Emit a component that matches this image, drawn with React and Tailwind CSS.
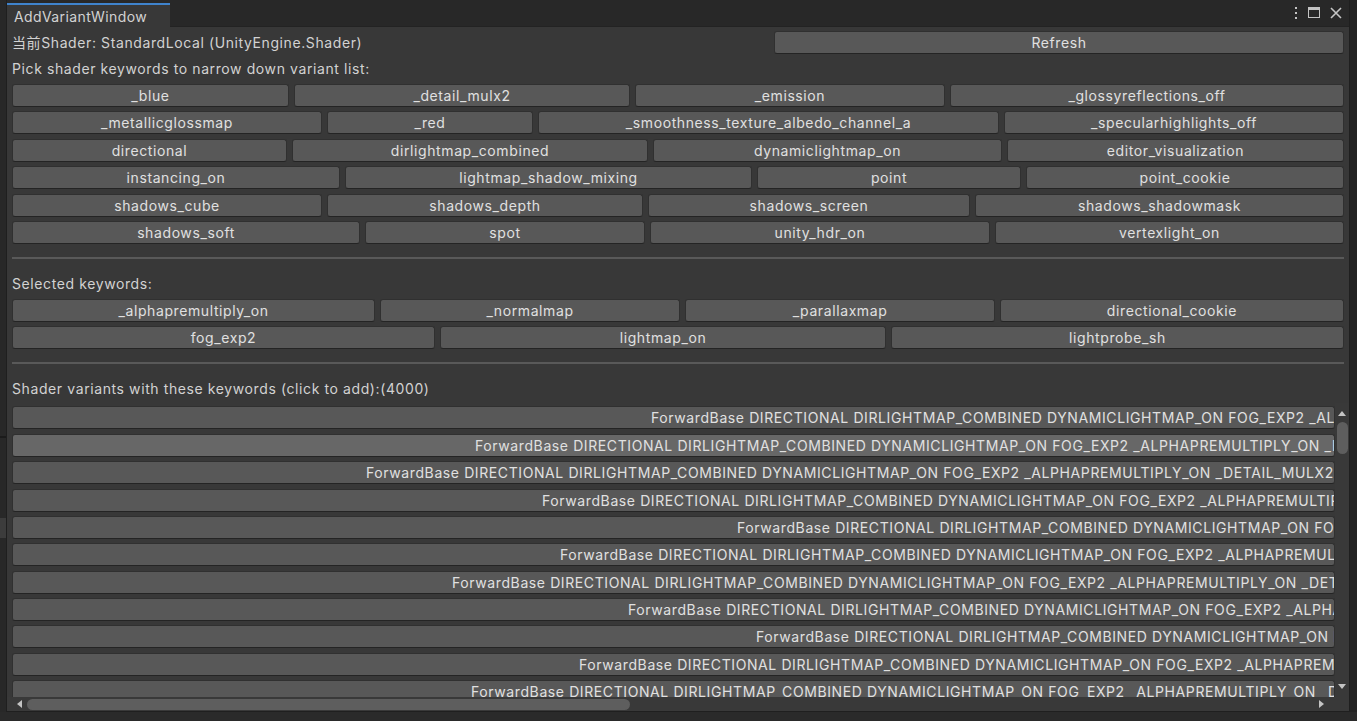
import React from 'react';

const pickRows = [
  [
    { label: '_blue', w: 'w-[277px]' },
    { label: '_detail_mulx2', w: 'w-[336px]' },
    { label: '_emission', w: 'w-[310px]' },
    { label: '_glossyreflections_off', w: 'flex-1' },
  ],
  [
    { label: '_metallicglossmap', w: 'w-[310px]' },
    { label: '_red', w: 'w-[206px]' },
    { label: '_smoothness_texture_albedo_channel_a', w: 'w-[461px]' },
    { label: '_specularhighlights_off', w: 'flex-1' },
  ],
  [
    { label: 'directional', w: 'w-[275px]' },
    { label: 'dirlightmap_combined', w: 'w-[356px]' },
    { label: 'dynamiclightmap_on', w: 'w-[349px]' },
    { label: 'editor_visualization', w: 'flex-1' },
  ],
  [
    { label: 'instancing_on', w: 'w-[328px]' },
    { label: 'lightmap_shadow_mixing', w: 'w-[407px]' },
    { label: 'point', w: 'w-[264px]' },
    { label: 'point_cookie', w: 'flex-1' },
  ],
  [
    { label: 'shadows_cube', w: 'w-[310px]' },
    { label: 'shadows_depth', w: 'w-[316px]' },
    { label: 'shadows_screen', w: 'w-[322px]' },
    { label: 'shadows_shadowmask', w: 'flex-1' },
  ],
  [
    { label: 'shadows_soft', w: 'w-[348px]' },
    { label: 'spot', w: 'w-[280px]' },
    { label: 'unity_hdr_on', w: 'w-[340px]' },
    { label: 'vertexlight_on', w: 'flex-1' },
  ],
];

const selectedRows = [
  [
    { label: '_alphapremultiply_on', w: 'w-[363px]' },
    { label: '_normalmap', w: 'w-[300px]' },
    { label: '_parallaxmap', w: 'w-[310px]' },
    { label: 'directional_cookie', w: 'flex-1' },
  ],
  [
    { label: 'fog_exp2', w: 'w-[423px]' },
    { label: 'lightmap_on', w: 'w-[446px]' },
    { label: 'lightprobe_sh', w: 'flex-1' },
  ],
];

const base = 'ForwardBase DIRECTIONAL DIRLIGHTMAP_COMBINED DYNAMICLIGHTMAP_ON FOG_EXP2 _ALPHAPREMULTIPLY_ON';

const variants = [
  { pad: 'pl-[638px]', tail: ' _BLUE _DETAIL_MULX2 _EMISSION' },
  { pad: 'pl-[462px]', tail: ' _BLUE _DETAIL_MULX2', hot: true },
  { pad: 'pl-[353px]', tail: ' _DETAIL_MULX2 _EMISSION _GLOSSYREFLECTIONS_OFF' },
  { pad: 'pl-[529px]', tail: ' _BLUE _EMISSION' },
  { pad: 'pl-[724px]', tail: ' _RED' },
  { pad: 'pl-[547px]', tail: ' _EMISSION _RED' },
  { pad: 'pl-[439px]', tail: ' _DETAIL_MULX2 _METALLICGLOSSMAP' },
  { pad: 'pl-[615px]', tail: ' _BLUE _RED' },
  { pad: 'pl-[743px]', tail: ' _RED _EMISSION' },
  { pad: 'pl-[566px]', tail: ' _EMISSION _METALLICGLOSSMAP' },
  { pad: 'pl-[458px]', tail: ' _DETAIL_MULX2 _EMISSION _RED' },
];

function KeyButton({ label, w }) {
  return (
    <div className={`${w} h-[23px] shrink-0 rounded-[3px] bg-[#585858] border border-[#303030] border-b-[#242424] flex items-center justify-center text-[#e0e0e0] whitespace-nowrap overflow-hidden`}>
      {label}
    </div>
  );
}

function ButtonRows({ rows }) {
  return (
    <div className="flex flex-col gap-[4.4px]">
      {rows.map((row, i) => (
        <div key={i} className="flex gap-[5px]">
          {row.map((b) => (
            <KeyButton key={b.label} {...b} />
          ))}
        </div>
      ))}
    </div>
  );
}

function App() {
  return (
    <div className="w-[1357px] h-[721px] bg-[#282828] overflow-hidden flex flex-col font-['Inter','Noto_Sans_CJK_SC',sans-serif] text-[14px] tracking-[0.6px]">
      <div className="h-[712px] flex">
        {/* editor behind the window */}
        <div className="w-[6px] flex flex-col bg-[#282828]">
          <div className="h-[436px]" />
          <div className="h-[2px] bg-[#1b1b1b]" />
          <div className="h-[80px]" />
          <div className="h-[20px] bg-[#3c3c3c]" />
        </div>

        <div className="w-[1344px] flex flex-col border-x border-[#1f1f1f]">
          {/* tab bar */}
          <div className="h-[27px] bg-[#282828] border-b border-[#232323] flex items-end">
            <div className="w-[163px] h-[24px] bg-[#383838] border-t-2 border-[#3f83cc] flex items-center pl-[7px] text-[#d2d2d2] -mb-px tracking-[0.4px]">
              AddVariantWindow
            </div>
            <div className="flex-1" />
            <div className="flex items-center gap-[8px] h-[26px] pr-[6px] self-start">
              <svg width="6" height="14" viewBox="0 0 6 14">
                <rect x="2" y="1" width="2" height="2" fill="#c4c4c4" />
                <rect x="2" y="6" width="2" height="2" fill="#c4c4c4" />
                <rect x="2" y="11" width="2" height="2" fill="#c4c4c4" />
              </svg>
              <svg width="14" height="14" viewBox="0 0 14 14">
                <rect x="1.5" y="1.5" width="11" height="10" fill="none" stroke="#c4c4c4" strokeWidth="1" />
                <rect x="1" y="1" width="12" height="3" fill="#c4c4c4" />
              </svg>
              <svg width="14" height="14" viewBox="0 0 14 14">
                <path d="M2 2 L12 12 M12 2 L2 12" stroke="#c4c4c4" strokeWidth="1.6" />
              </svg>
            </div>
          </div>

          {/* window content */}
          <div className="flex-1 bg-[#383838] flex flex-col min-h-0">
            <div className="px-[5px] pt-[4px] flex flex-col">
              <div className="h-[23px] flex items-center">
                <div className="flex-1 text-[#d2d2d2] whitespace-nowrap">当前Shader: StandardLocal (UnityEngine.Shader)</div>
                <KeyButton label="Refresh" w="w-[570px]" />
              </div>
              <div className="h-[25px] mt-[2px] mb-[3px] flex items-center text-[#d2d2d2]">
                Pick shader keywords to narrow down variant list:
              </div>
              <ButtonRows rows={pickRows} />
              <div className="h-[2px] bg-[#595959] mt-[13px]" />
              <div className="h-[25px] mt-[12px] mb-[3px] flex items-center text-[#d2d2d2]">Selected keywords:</div>
              <ButtonRows rows={selectedRows} />
              <div className="h-[2px] bg-[#595959] mt-[13px]" />
              <div className="h-[25px] mt-[12px] mb-[2px] flex items-center text-[#d2d2d2]">
                Shader variants with these keywords (click to add):(4000)
              </div>
            </div>

            {/* scroll view */}
            <div className="flex-1 flex flex-col min-h-0">
              <div className="flex-1 flex min-h-0">
                <div className="flex-1 overflow-hidden pl-[5px] pt-[3px] flex flex-col gap-[4.4px]">
                  {variants.map((v, i) => (
                    <div
                      key={i}
                      className={`h-[23px] shrink-0 rounded-[3px] border border-[#303030] border-b-[#242424] flex items-center overflow-hidden whitespace-nowrap text-[#e0e0e0] ${v.hot ? 'bg-[#676767]' : 'bg-[#585858]'}`}
                    >
                      <span className={v.pad}>{base + v.tail}</span>
                    </div>
                  ))}
                </div>
                {/* vertical scrollbar */}
                <div className="w-[14px] flex flex-col items-center bg-[#393939]">
                  <svg width="10" height="14" viewBox="0 0 10 14" className="mt-[4px]">
                    <path d="M1 9 L5 4 L9 9 Z" fill="#c4c4c4" />
                  </svg>
                  <div className="w-[11px] h-[32px] rounded-full bg-[#5e5e5e] mt-[1px]" />
                  <div className="flex-1" />
                  <svg width="10" height="14" viewBox="0 0 10 14" className="mb-[3px]">
                    <path d="M1 4 L9 4 L5 9 Z" fill="#c4c4c4" />
                  </svg>
                </div>
              </div>
              {/* horizontal scrollbar */}
              <div className="h-[14px] flex bg-[#393939]">
                <div className="flex-1 flex items-center">
                  <svg width="14" height="14" viewBox="0 0 14 14" className="ml-[5px]">
                    <path d="M10 3 L5 7 L10 11 Z" fill="#c4c4c4" />
                  </svg>
                  <div className="w-[603px] h-[11px] rounded-full bg-[#5e5e5e] ml-[1px]" />
                  <div className="flex-1" />
                  <svg width="14" height="14" viewBox="0 0 14 14" className="mr-[6px]">
                    <path d="M4 3 L9 7 L4 11 Z" fill="#c4c4c4" />
                  </svg>
                </div>
                <div className="w-[14px] bg-[#393939]" />
              </div>
              <div className="h-[1px] bg-[#1f1f1f]" />
            </div>
          </div>
        </div>

        <div className="w-[7px] bg-[#232323]" />
      </div>
      <div className="flex-1 bg-[#2a2a2a]" />
    </div>
  );
}

export default App;
